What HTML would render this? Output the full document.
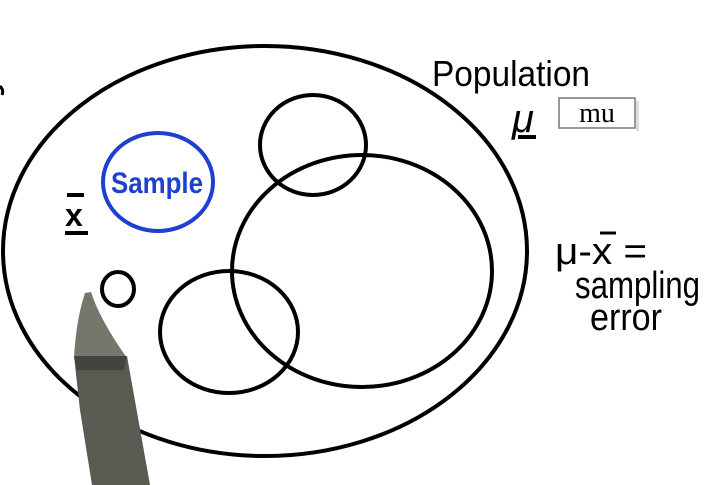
<!DOCTYPE html>
<html><head><meta charset="utf-8"><style>
html,body{margin:0;padding:0;background:#fff;width:723px;height:485px;overflow:hidden}
svg{display:block}
text{font-family:"Liberation Sans",sans-serif}
</style></head><body>
<svg width="723" height="485" viewBox="0 0 723 485" xmlns="http://www.w3.org/2000/svg">
<rect width="723" height="485" fill="#fff"/>
<g fill="none" stroke="#000" stroke-width="4">
<ellipse cx="265" cy="251" rx="262" ry="205"/>
<ellipse cx="313" cy="145" rx="53" ry="50"/>
<ellipse cx="362" cy="271" rx="130" ry="116"/>
<ellipse cx="229" cy="332" rx="69" ry="61"/>
<ellipse cx="118" cy="289" rx="16" ry="17"/>
<path d="M65 233 L88 233"/>
<path d="M67 195 L84 195"/>
<path d="M518 137 L536 137"/>
</g>
<ellipse cx="158" cy="182" rx="55" ry="49" fill="none" stroke="#1f3fcf" stroke-width="4"/>
<text x="111" y="193" font-size="30" fill="#1f3fcf" textLength="92" lengthAdjust="spacingAndGlyphs" font-weight="bold">Sample</text>
<text x="65" y="226" font-size="32" font-weight="bold" fill="#000">x</text>
<text x="432" y="86" font-size="36" fill="#000" textLength="158" lengthAdjust="spacingAndGlyphs">Population</text>
<text x="512" y="132" font-size="40" fill="#000" font-style="italic">μ</text>
<rect x="559" y="98" width="76" height="30" fill="#fff" stroke="#777" stroke-width="1.5"/>
<rect x="636" y="101" width="3" height="30" fill="#ddd"/>
<text x="597" y="122" font-size="28" text-anchor="middle" style="font-family:'Liberation Serif',serif" fill="#000">mu</text>
<text x="555" y="264" font-size="38" fill="#000" textLength="92" lengthAdjust="spacingAndGlyphs">μ-x =</text>
<path d="M600 233 L616 233" stroke="#000" stroke-width="3"/>
<text x="575" y="298" font-size="38" fill="#000" textLength="125" lengthAdjust="spacingAndGlyphs">sampling</text>
<text x="590" y="330" font-size="38" fill="#000" textLength="72" lengthAdjust="spacingAndGlyphs">error</text>
<path d="M85,293 L91,292 Q100,320 127,358 L74,358 Q76,320 85,293 Z" fill="#77766c"/>
<polygon points="74,356 127,356 150,485 92,485 80,410" fill="#5a5a52"/>
<polygon points="74,356 127,356 124,370 77,370" fill="#44443e"/>
<path d="M2 95 Q4 90 0 86" stroke="#000" stroke-width="3" fill="none"/>
</svg>
</body></html>
